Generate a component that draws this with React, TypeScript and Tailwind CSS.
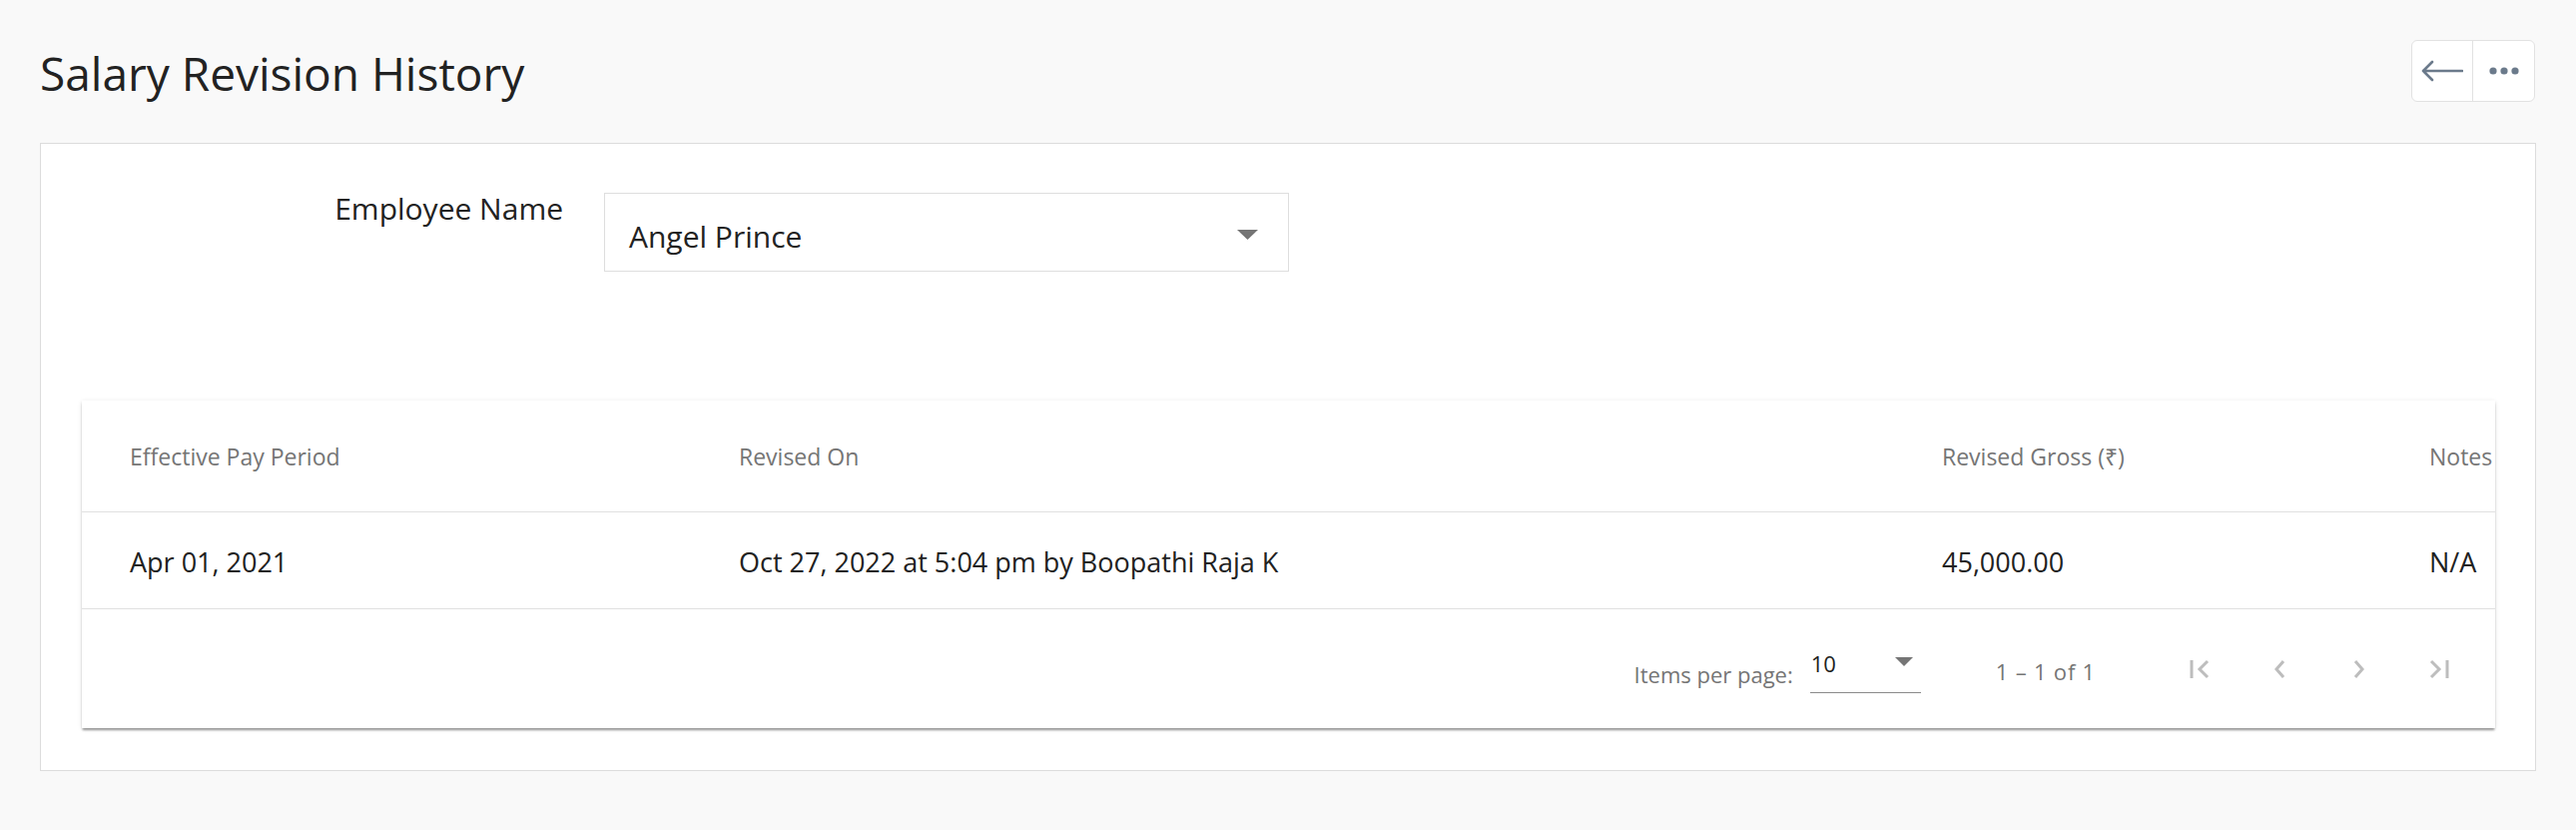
import { useState } from "react";

interface Revision {
  id: number;
  period: string;
  revisedOn: string;
  gross: string;
  notes: string;
}

const revisions: Revision[] = [
  {
    id: 1,
    period: "Apr 01, 2021",
    revisedOn: "Oct 27, 2022 at 5:04 pm by Boopathi Raja K",
    gross: "45,000.00",
    notes: "N/A",
  },
];

const cols = "grid grid-cols-[610px_1205px_488px_1fr] pl-[48px]";

function BackArrow() {
  return (
    <svg width="42" height="22" viewBox="0 0 42 22" fill="none">
      <path d="M2 11H41M11 2L2 11L11 20" stroke="#6b7a8b" strokeWidth="2.6" strokeLinecap="round" strokeLinejoin="round" />
    </svg>
  );
}

function Dots() {
  return (
    <svg width="30" height="8" viewBox="0 0 30 8" fill="#6b7a8b">
      <circle cx="4" cy="4" r="3.6" />
      <circle cx="15" cy="4" r="3.6" />
      <circle cx="26" cy="4" r="3.6" />
    </svg>
  );
}

function Caret({ w, h }: { w: number; h: number }) {
  return (
    <svg width={w} height={h} viewBox="0 0 20 10" preserveAspectRatio="none">
      <path d="M0 0H20L10 10Z" fill="#757575" />
    </svg>
  );
}

// pager glyphs: first, prev, next, last
function PagerIcon({ kind }: { kind: "first" | "prev" | "next" | "last" }) {
  const stroke = "#bdbdbd";
  return (
    <svg width="24" height="22" viewBox="0 0 24 22" fill="none" stroke={stroke} strokeWidth="3">
      {kind === "first" && (
        <>
          <path d="M4 2V20" />
          <path d="M20 3L12 11L20 19" />
        </>
      )}
      {kind === "prev" && <path d="M16 3L9 11L16 19" />}
      {kind === "next" && <path d="M8 3L15 11L8 19" />}
      {kind === "last" && (
        <>
          <path d="M4 3L12 11L4 19" />
          <path d="M20 2V20" />
        </>
      )}
    </svg>
  );
}

export default function App() {
  const [employee] = useState("Angel Prince");
  const [pageSize] = useState(10);

  return (
    <div className="min-h-screen bg-[#f9f9f9] px-[40px] pt-[40px] pb-[59px] font-['Open_Sans',sans-serif] text-[#212121]">
      <div className="flex h-[62px] items-center justify-between">
        <h1 className="text-[46px] leading-[58px] font-normal text-[#222222] mt-[4px]">Salary Revision History</h1>
        <div className="flex h-[62px] overflow-hidden rounded-[6px] border border-[#e2e2e2] bg-white mr-[1px]">
          <button className="flex w-[61px] items-center justify-center border-r border-[#e2e2e2]">
            <BackArrow />
          </button>
          <button className="flex w-[61px] items-center justify-center">
            <Dots />
          </button>
        </div>
      </div>

      <div className="mt-[41px] border border-[#dcdcdc] bg-white pt-[49px] pb-[42px] pl-[41px] pr-[40px]">
        <div className="flex items-start">
          <label className="w-[482px] text-right text-[30px] leading-[32px] text-[#222222]">Employee Name</label>
          <div className="ml-[41px] flex h-[79px] w-[686px] items-center justify-between border border-[#dedede] bg-white pl-[24px] pr-[30px] pt-[8px]">
            <span className="text-[30px] text-[#222222]">{employee}</span>
            <span className="-mt-[4px]">
              <Caret w={21} h={10} />
            </span>
          </div>
        </div>

        <div className="mt-[129px] overflow-hidden bg-white shadow-[0_3px_2px_-1px_rgba(0,0,0,0.28),0_2px_2px_0_rgba(0,0,0,0.12),0_1px_5px_0_rgba(0,0,0,0.1)]">
          <div className={`${cols} h-[112px] items-center border-b border-[#e0e0e0] pt-[2px] text-[23px] text-[#757575] whitespace-nowrap`}>
            <div>Effective Pay Period</div>
            <div>Revised On</div>
            <div>Revised Gross (₹)</div>
            <div>Notes</div>
          </div>
          {revisions.map((r) => (
            <div
              key={r.id}
              className={`${cols} h-[97px] items-center border-b border-[#e0e0e0] pt-[4px] text-[27px] text-[#212121] whitespace-nowrap`}
            >
              <div>{r.period}</div>
              <div>{r.revisedOn}</div>
              <div>{r.gross}</div>
              <div>{r.notes}</div>
            </div>
          ))}
          <div className="flex h-[119px] items-center justify-end pr-[16px] text-[22px] text-[#757575]">
            <span className="mt-[12px]">Items per page:</span>
            <div className="ml-[17px] mt-[4px] flex h-[44px] w-[111px] items-start justify-between border-b border-[#8a8a8a] pl-[1px] pr-[8px]">
              <span className="text-[22px] leading-[28px] text-[#212121]">{pageSize}</span>
              <span className="mt-[8px]">
                <Caret w={18} h={9} />
              </span>
            </div>
            <span className="ml-[75px] mt-[6px] whitespace-pre tracking-[0.8px]">1 – 1 of 1</span>
            <div className="ml-[64px] flex">
              {(["first", "prev", "next", "last"] as const).map((k) => (
                <button key={k} className="flex h-[60px] w-[80px] items-center justify-center">
                  <PagerIcon kind={k} />
                </button>
              ))}
            </div>
          </div>
        </div>
      </div>
    </div>
  );
}
